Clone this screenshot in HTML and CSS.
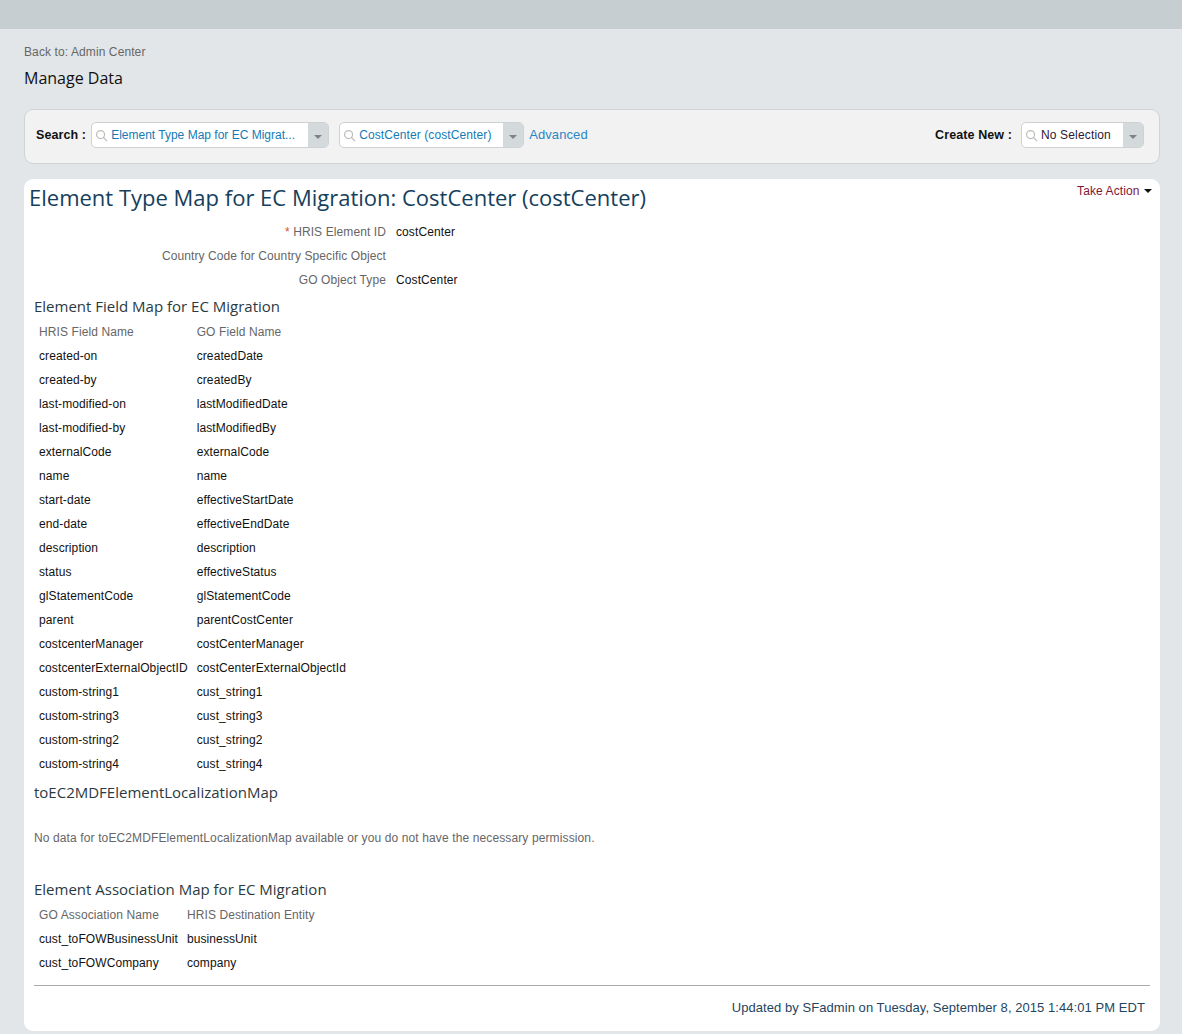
FILE: index.html
```html
<!DOCTYPE html>
<html>

<head>
    <meta name="viewport" content="width=device-width, initial-scale=1.0" />
    <title>Manage Data</title>
    <link rel="stylesheet" href="styles.css">
</head>

<body>
    <div class="top-bar"></div>

    <div class="page">
        <div class="back-link">Back to: Admin Center</div>
        <h1 class="page-title">Manage Data</h1>

        <!-- Search bar -->
        <div class="search-bar">
            <span class="bar-label">Search :</span>
            <div class="combo combo-type">
                <svg class="lens" viewBox="0 0 14 14"><circle cx="6" cy="6" r="4.3" /><path d="M9.2 9.2 L13 13" /></svg>
                <span class="combo-text">Element Type Map for EC Migrat...</span>
                <span class="combo-arrow"></span>
            </div>
            <div class="combo combo-item">
                <svg class="lens" viewBox="0 0 14 14"><circle cx="6" cy="6" r="4.3" /><path d="M9.2 9.2 L13 13" /></svg>
                <span class="combo-text">CostCenter (costCenter)</span>
                <span class="combo-arrow"></span>
            </div>
            <a class="advanced" href="#">Advanced</a>
            <span class="bar-label create-label">Create New :</span>
            <div class="combo combo-new">
                <svg class="lens" viewBox="0 0 14 14"><circle cx="6" cy="6" r="4.3" /><path d="M9.2 9.2 L13 13" /></svg>
                <span class="combo-text plain">No Selection</span>
                <span class="combo-arrow"></span>
            </div>
        </div>

        <!-- Record -->
        <div class="card">
            <div class="card-head">
                <h2 class="record-title">Element Type Map for EC Migration: CostCenter (costCenter)</h2>
                <a class="take-action" href="#">Take Action <span class="caret"></span></a>
            </div>

            <div class="form-rows">
                <div class="form-label"><span class="star">*</span> HRIS Element ID</div>
                <div class="form-value">costCenter</div>
                <div class="form-label">Country Code for Country Specific Object</div>
                <div class="form-value"></div>
                <div class="form-label">GO Object Type</div>
                <div class="form-value">CostCenter</div>
            </div>

            <h3 class="section-title field-map">Element Field Map for EC Migration</h3>
            <table class="map-table">
                <tr><th>HRIS Field Name</th><th>GO Field Name</th></tr>
                <tr><td>created-on</td><td>createdDate</td></tr>
                <tr><td>created-by</td><td>createdBy</td></tr>
                <tr><td>last-modified-on</td><td>lastModifiedDate</td></tr>
                <tr><td>last-modified-by</td><td>lastModifiedBy</td></tr>
                <tr><td>externalCode</td><td>externalCode</td></tr>
                <tr><td>name</td><td>name</td></tr>
                <tr><td>start-date</td><td>effectiveStartDate</td></tr>
                <tr><td>end-date</td><td>effectiveEndDate</td></tr>
                <tr><td>description</td><td>description</td></tr>
                <tr><td>status</td><td>effectiveStatus</td></tr>
                <tr><td>glStatementCode</td><td>glStatementCode</td></tr>
                <tr><td>parent</td><td>parentCostCenter</td></tr>
                <tr><td>costcenterManager</td><td>costCenterManager</td></tr>
                <tr><td>costcenterExternalObjectID</td><td>costCenterExternalObjectId</td></tr>
                <tr><td>custom-string1</td><td>cust_string1</td></tr>
                <tr><td>custom-string3</td><td>cust_string3</td></tr>
                <tr><td>custom-string2</td><td>cust_string2</td></tr>
                <tr><td>custom-string4</td><td>cust_string4</td></tr>
            </table>

            <h3 class="section-title">toEC2MDFElementLocalizationMap</h3>
            <p class="no-data">No data for toEC2MDFElementLocalizationMap available or you do not have the necessary permission.</p>

            <h3 class="section-title assoc-map">Element Association Map for EC Migration</h3>
            <table class="map-table">
                <tr><th>GO Association Name</th><th>HRIS Destination Entity</th></tr>
                <tr><td>cust_toFOWBusinessUnit</td><td>businessUnit</td></tr>
                <tr><td>cust_toFOWCompany</td><td>company</td></tr>
            </table>

            <div class="updated">Updated by SFadmin on Tuesday, September 8, 2015 1:44:01 PM EDT</div>
        </div>
    </div>
</body>

</html>
```

FILE: styles.css
```css
* {
    box-sizing: border-box;
}

html,
body {
    margin: 0;
    height: 1034px;
    overflow: hidden;
}

body {
    background: #e2e6e9;
    font-family: "Liberation Sans", Arial, sans-serif;
    font-size: 12px;
    letter-spacing: 0.1px;
    color: #000;
}

.top-bar {
    height: 29px;
    background: #c6ced1;
}

.page {
    padding: 0 22px 0 24px;
}

.back-link {
    padding-top: 16px;
    line-height: 14px;
    color: #666;
}

.page-title {
    margin: 7px 0 0;
    font-family: "Open Sans", sans-serif;
    font-size: 16px;
    font-weight: 400;
    line-height: 24px;
    letter-spacing: 0;
    color: #111;
}

/* Search bar */
.search-bar {
    display: flex;
    align-items: center;
    height: 55px;
    margin-top: 19px;
    padding: 0 15px 4px 11px;
    background: #f2f2f2;
    border: 1px solid #cfd4d7;
    border-radius: 9px;
}

.bar-label {
    font-size: 12.5px;
    font-weight: 700;
    white-space: nowrap;
    color: #111;
}

.create-label {
    margin-left: auto;
    margin-right: 9px;
}

.combo {
    display: flex;
    align-items: center;
    height: 26px;
    background: #fff;
    border: 1px solid #cdd2d5;
    border-radius: 5px;
    overflow: hidden;
}

.combo-type {
    width: 238px;
    margin-left: 5px;
    letter-spacing: 0;
}

.combo-item {
    width: 185px;
    margin-left: 10px;
}

.combo-new {
    width: 123px;
    letter-spacing: 0.15px;
}

.lens {
    flex: none;
    width: 13px;
    height: 13px;
    margin: 1px 3px 0 3px;
    fill: none;
    stroke: #bdbdb8;
    stroke-width: 1.3;
}

.combo-text {
    flex: 1;
    white-space: nowrap;
    overflow: hidden;
    color: #147bb5;
}

.combo-text.plain {
    color: #2b1a33;
}

.combo-arrow {
    position: relative;
    flex: none;
    width: 20px;
    height: 100%;
    background: #d4d9dc;
}

.combo-arrow::after {
    content: "";
    position: absolute;
    left: 6px;
    top: 12px;
    border-left: 4px solid transparent;
    border-right: 4px solid transparent;
    border-top: 4px solid #7d8487;
}

.advanced {
    margin-left: 5px;
    font-size: 13px;
    color: #2a86c5;
    text-decoration: none;
}

/* Record card */
.card {
    height: 852px;
    margin-top: 15px;
    padding: 0 10px 0 5px;
    background: #fff;
    border-radius: 9px;
}

.card-head {
    display: flex;
    justify-content: space-between;
    height: 38px;
}

.record-title {
    margin: 2px 0 0;
    font-family: "Open Sans", sans-serif;
    font-size: 22px;
    font-weight: 400;
    line-height: 32px;
    letter-spacing: 0;
    color: #15405c;
}

.take-action {
    margin: 5px -2px 0 0;
    line-height: 14px;
    color: #7f1734;
    text-decoration: none;
}

.caret {
    display: inline-block;
    margin-left: 1px;
    vertical-align: 2px;
    border-left: 4px solid transparent;
    border-right: 4px solid transparent;
    border-top: 4px solid #111;
}

.form-rows {
    display: grid;
    grid-template-columns: 357px auto;
    grid-auto-rows: 24px;
    column-gap: 10px;
    justify-content: start;
    align-items: center;
    margin-top: 3px;
}

.form-label {
    text-align: right;
    color: #666;
}

.star {
    color: #d9542b;
}

.form-value {
    color: #111;
}

.section-title {
    margin: 4px 0 0 5px;
    height: 24px;
    font-family: "Open Sans", sans-serif;
    font-size: 15px;
    font-weight: 400;
    line-height: 24px;
    letter-spacing: 0;
    color: #2b3a42;
}

.section-title.field-map {
    height: 26px;
    margin-top: 2px;
}

.section-title.assoc-map {
    height: 26px;
    margin-top: 32px;
}

.map-table {
    margin-left: 5px;
    border-collapse: collapse;
}

.map-table th,
.map-table td {
    height: 24px;
    padding: 0 4px 0 5px;
    text-align: left;
    white-space: nowrap;
}

.map-table th {
    font-weight: 400;
    color: #666;
}

.map-table td {
    color: #111;
}

.no-data {
    margin: 27px 0 0 5px;
    line-height: 14px;
    letter-spacing: 0.12px;
    color: #666;
}

.updated {
    margin: 10px 0 0 5px;
    padding: 14px 5px 0 0;
    border-top: 1px solid #a9a9a9;
    text-align: right;
    font-size: 13px;
    letter-spacing: 0.06px;
    line-height: 16px;
    color: #1f4560;
}
```
